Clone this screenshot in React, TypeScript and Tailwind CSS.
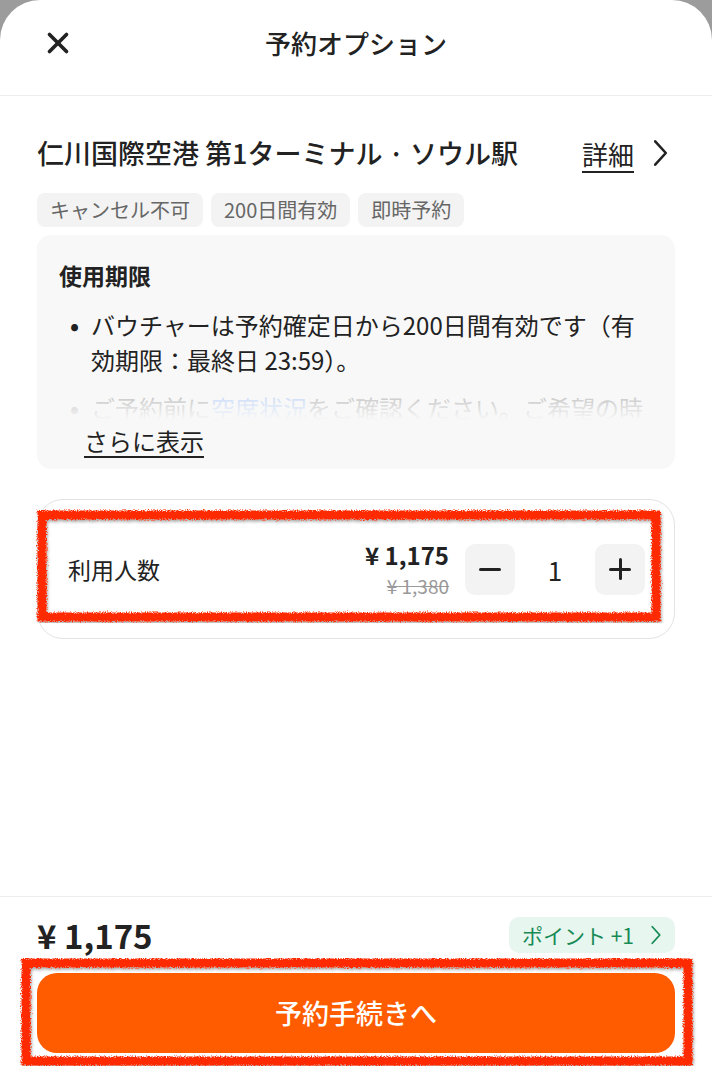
import { X } from 'lucide-react';

function Chevron({ className }: { className?: string }) {
  return (
    <svg viewBox="0 0 16 28" className={className} fill="none" stroke="currentColor" strokeWidth={2.4} strokeLinecap="round" strokeLinejoin="round">
      <polyline points="3,3 13,14 3,25" />
    </svg>
  );
}

// 手描き風の赤い注釈枠
function Scribble({ x, y, w, h, id }: { x: number; y: number; w: number; h: number; id: string }) {
  return (
    <svg
      className="absolute pointer-events-none"
      style={{ left: x - 8, top: y - 8, width: w + 16, height: h + 16 }}
      viewBox={`0 0 ${w + 16} ${h + 16}`}
    >
      <defs>
        <filter id={id} x="-5%" y="-5%" width="110%" height="110%">
          <feTurbulence type="fractalNoise" baseFrequency="0.8" numOctaves="2" seed="3" />
          <feDisplacementMap in="SourceGraphic" scale="5" />
          <feDropShadow dx="1" dy="2" stdDeviation="1.5" floodColor="#000" floodOpacity="0.35" />
        </filter>
      </defs>
      <rect x={8 + 4} y={8 + 4} width={w - 8} height={h - 8} fill="none" stroke="#ff2a00" strokeWidth={9} filter={`url(#${id})`} />
    </svg>
  );
}

export default function App() {
  const font = { fontFamily: '"Noto Sans CJK JP", "Noto Sans", sans-serif' };
  return (
    <div className="relative w-[712px] h-[1067px] bg-[#9c9c9c] overflow-hidden text-[#222]" style={font}>
      <div className="flex flex-col h-full bg-white rounded-t-[40px]">
        {/* header */}
        <div className="relative h-[96px] shrink-0 flex items-center justify-center border-b border-[#ededed]">
          <X className="absolute left-[41px] top-[26px] w-[34px] h-[34px] text-[#222]" strokeWidth={2.6} />
          <div className="text-[26px] font-medium leading-none -mt-[10px]">予約オプション</div>
        </div>

        {/* main */}
        <div className="flex-1 px-[37px] pt-[40px]">
          <div className="flex items-center justify-between h-[34px]">
            <div className="text-[27px] font-medium leading-[34px] whitespace-nowrap">仁川国際空港 第1ターミナル · ソウル駅</div>
            <div className="flex items-center gap-[18px] pr-[6px]">
              <span className="text-[26px] underline underline-offset-[6px] decoration-[1.5px]">詳細</span>
              <Chevron className="w-[17px] h-[30px] text-[#222]" />
            </div>
          </div>

          <div className="flex gap-[8px] mt-[23px]">
            {['キャンセル不可', '200日間有効', '即時予約'].map((t) => (
              <div key={t} className="h-[34px] px-[13px] rounded-[8px] bg-[#f3f3f3] text-[#666] text-[20px] leading-[34px]">
                {t}
              </div>
            ))}
          </div>

          <div className="mt-[8px] h-[234px] rounded-[14px] bg-[#f8f8f8] px-[22px] pt-[26px]">
            <div className="text-[23px] font-bold leading-[28px]">使用期限</div>
            <div className="relative mt-[18px] h-[113px] overflow-hidden">
              <div className="flex text-[24px] leading-[35px]">
                <span className="w-[32px] shrink-0 pl-[11px] font-bold">•</span>
                <span className="max-w-[552px]">バウチャーは予約確定日から200日間有効です（有効期限：最終日 23:59）。</span>
              </div>
              <div className="flex text-[24px] leading-[35px] mt-[13px]">
                <span className="w-[32px] shrink-0 pl-[11px] font-bold">•</span>
                <span className="whitespace-nowrap">ご予約前に<span className="text-[#3b82f6]">空席状況</span>をご確認ください。ご希望の時</span>
              </div>
              <div className="absolute inset-x-0 top-[70px] h-[43px] bg-gradient-to-b from-[#f8f8f8]/60 to-[#f8f8f8]" />
            </div>
            <div className="mt-[7px] text-[24px] leading-[28px] pl-[25px]">
              <span className="underline underline-offset-[5px] decoration-[1.5px]">さらに表示</span>
            </div>
          </div>

          <div className="mt-[30px] h-[140px] rounded-[26px] border border-[#e3e3e3] flex items-center pl-[30px] pr-[29px]">
            <div className="flex-1 text-[23px]">利用人数</div>
            <div className="flex flex-col items-end mr-[16px]">
              <div className="text-[24px] font-bold leading-[30px]">¥ 1,175</div>
              <div className="text-[19px] text-[#999] line-through leading-[24px] mt-[4px]">¥ 1,380</div>
            </div>
            <div className="w-[50px] h-[51px] rounded-[10px] bg-[#f3f3f3] flex items-center justify-center">
              <div className="w-[22px] h-[3px] bg-[#222] rounded" />
            </div>
            <div className="w-[80px] text-center text-[26px]">1</div>
            <div className="w-[50px] h-[51px] rounded-[10px] bg-[#f3f3f3] flex items-center justify-center relative">
              <div className="w-[22px] h-[3px] bg-[#222] rounded" />
              <div className="absolute w-[3px] h-[22px] bg-[#222] rounded" />
            </div>
          </div>
        </div>

        {/* footer */}
        <div className="shrink-0 border-t border-[#ededed] px-[37px] pt-[18px] pb-[14px]">
          <div className="flex items-center justify-between h-[40px]">
            <div className="text-[33px] font-bold leading-[40px]">¥ 1,175</div>
            <div className="h-[36px] px-[13px] rounded-[10px] bg-[#e7f6ef] text-[#178a55] flex items-center gap-[16px]">
              <span className="text-[21px] leading-none">ポイント +1</span>
              <Chevron className="w-[12px] h-[22px]" />
            </div>
          </div>
          <div className="mt-[18px] h-[80px] rounded-[20px] bg-[#ff5c00] flex items-center justify-center text-white text-[27px] font-medium">
            予約手続きへ
          </div>
        </div>
      </div>

      <Scribble id="s1" x={38} y={511} w={622} h={110} />
      <Scribble id="s2" x={22} y={959} w={670} h={106} />
    </div>
  );
}
